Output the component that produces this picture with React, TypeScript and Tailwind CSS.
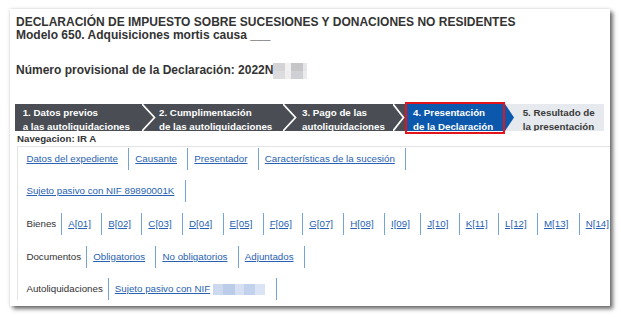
import React from "react";

const font = { fontFamily: '"Liberation Sans", Arial, sans-serif' };

function Chevron({ w, bg }: { w: number; bg: string }) {
  return (
    <svg width={w} height={27} viewBox={`0 0 ${w} 27`} className="block flex-none">
      <rect width={w} height={27} fill={bg} />
      <polyline points={`0,0 ${w - 1.5},13.5 0,27`} fill="none" stroke="#ffffff" strokeWidth={1.7} />
    </svg>
  );
}

function Step({ w, pl, bg, color, lines }: { w: string; pl: string; bg: string; color: string; lines: string[] }) {
  return (
    <div className={`${w} ${pl} ${bg} ${color} h-[27px] flex-none overflow-hidden pt-[1.5px] font-bold text-[9.75px] leading-[14px] whitespace-nowrap`}>
      {lines.map((l) => (
        <div key={l}>{l}</div>
      ))}
    </div>
  );
}

function NavLink({ children, first }: { children: React.ReactNode; first?: boolean }) {
  return (
    <span className={`${first ? "" : "pl-[6px]"} pr-[10.3px] h-[22px] leading-[22px] border-r border-[#74a3d8] flex-none flex items-center`}>
      <a href="#" className="text-[#2962b2] underline">
        {children}
      </a>
    </span>
  );
}

function Label({ children }: { children: React.ReactNode }) {
  return (
    <span className="pr-[5px] h-[22px] leading-[22px] border-r border-[#74a3d8] flex-none text-[#333]">{children}</span>
  );
}

function Row({ children }: { children: React.ReactNode }) {
  return <div className="flex items-center h-[22px] whitespace-nowrap">{children}</div>;
}

const bienes = ["A[01]", "B[02]", "C[03]", "D[04]", "E[05]", "F[06]", "G[07]", "H[08]", "I[09]", "J[10]", "K[11]", "L[12]", "M[13]", "N[14]"];

export default function App() {
  return (
    <div className="min-h-screen bg-white pt-[9px] pl-[10px]" style={font}>
      <div className="w-[600px] h-[297px] bg-white overflow-hidden shadow-[3px_3px_4px_rgba(0,0,0,0.55),0_0_3px_rgba(0,0,0,0.18)]">
        {/* Cabecera */}
        <div className="pl-[6px] pt-[7px] font-bold text-[12px] leading-[13.3px] text-[#333]">
          <div>DECLARACIÓN DE IMPUESTO SOBRE SUCESIONES Y DONACIONES NO RESIDENTES</div>
          <div>Modelo 650. Adquisiciones mortis causa ___</div>
          <div className="mt-[20.2px] flex items-center">
            <span>Número provisional de la Declaración: 2022N</span>
            <span className="inline-grid grid-cols-[12px_6px_12px_4px] grid-rows-[8px_8px] h-[16px]">
              <span className="bg-[#d4d4d6]" />
              <span className="bg-[#f1f1f2]" />
              <span className="bg-[#c6c6c9]" />
              <span className="bg-[#e4e6ea]" />
              <span className="bg-[#dcdcde]" />
              <span className="bg-[#eeeeef]" />
              <span className="bg-[#cfd0d3]" />
              <span className="bg-[#e9ebee]" />
            </span>
          </div>
        </div>

        {/* Pasos */}
        <div className="ml-[5px] mt-[25.6px] flex h-[27px]">
          <Step w="w-[127px]" pl="pl-[7.7px]" bg="bg-[#4a4e54]" color="text-white" lines={["1. Datos previos", "a las autoliquidaciones"]} />
          <Chevron w={14} bg="#4a4e54" />
          <Step w="w-[127px]" pl="pl-[3px]" bg="bg-[#4a4e54]" color="text-white" lines={["2. Cumplimentación", "de las autoliquidaciones"]} />
          <Chevron w={14} bg="#4a4e54" />
          <Step w="w-[96px]" pl="pl-[5px]" bg="bg-[#4a4e54]" color="text-white" lines={["3. Pago de las", "autoliquidaciones"]} />
          <Chevron w={12} bg="#4a4e54" />
          <div className="relative flex-none">
            <Step w="w-[100px]" pl="pl-[8px]" bg="bg-[#0b58ad]" color="text-white" lines={["4. Presentación", "de la Declaración"]} />
            <div className="absolute left-0 right-0 -top-[2px] -bottom-[3px] border-2 border-[#e4141c]" />
          </div>
          <svg width={9} height={27} viewBox="0 0 9 27" className="block flex-none">
            <rect width={9} height={27} fill="#e6e9ed" />
            <polygon points="0,0 9,13.5 0,27" fill="#0b58ad" />
          </svg>
          <Step w="w-[90px]" pl="pl-[8.7px]" bg="bg-[#e6e9ed]" color="text-[#3a3a3a]" lines={["5. Resultado de", "la presentación"]} />
        </div>

        {/* Navegación */}
        <div className="ml-[7px] mt-[2px] font-bold text-[9.7px] leading-[12px] text-[#333]">Navegacion: IR A</div>
        <div className="ml-[7px] mt-[1px] border-l border-t border-[#e4e4e4] pl-[8.4px] pt-[0.5px] flex flex-col gap-[10.6px] text-[9.75px]">
          <Row>
            <NavLink first>Datos del expediente</NavLink>
            <NavLink>Causante</NavLink>
            <NavLink>Presentador</NavLink>
            <NavLink>Características de la sucesión</NavLink>
          </Row>
          <Row>
            <NavLink first>Sujeto pasivo con NIF 89890001K</NavLink>
          </Row>
          <Row>
            <Label>Bienes</Label>
            {bienes.map((b) => (
              <NavLink key={b}>{b}</NavLink>
            ))}
          </Row>
          <Row>
            <Label>Documentos</Label>
            <NavLink>Obligatorios</NavLink>
            <NavLink>No obligatorios</NavLink>
            <NavLink>Adjuntados</NavLink>
          </Row>
          <Row>
            <Label>Autoliquidaciones</Label>
            <span className="pl-[6px] pr-[10.3px] h-[22px] border-r border-[#74a3d8] flex-none flex items-center">
              <a href="#" className="text-[#2962b2] underline">Sujeto pasivo con NIF</a>
              <span className="ml-[3px] inline-grid grid-cols-[10px_12px_9px_11px_10px] h-[11px]">
                <span className="bg-[#cdd9ef]" />
                <span className="bg-[#bccde9]" />
                <span className="bg-[#d6e0f2]" />
                <span className="bg-[#c3d2ec]" />
                <span className="bg-[#dbe4f4]" />
              </span>
            </span>
          </Row>
        </div>
      </div>
    </div>
  );
}
